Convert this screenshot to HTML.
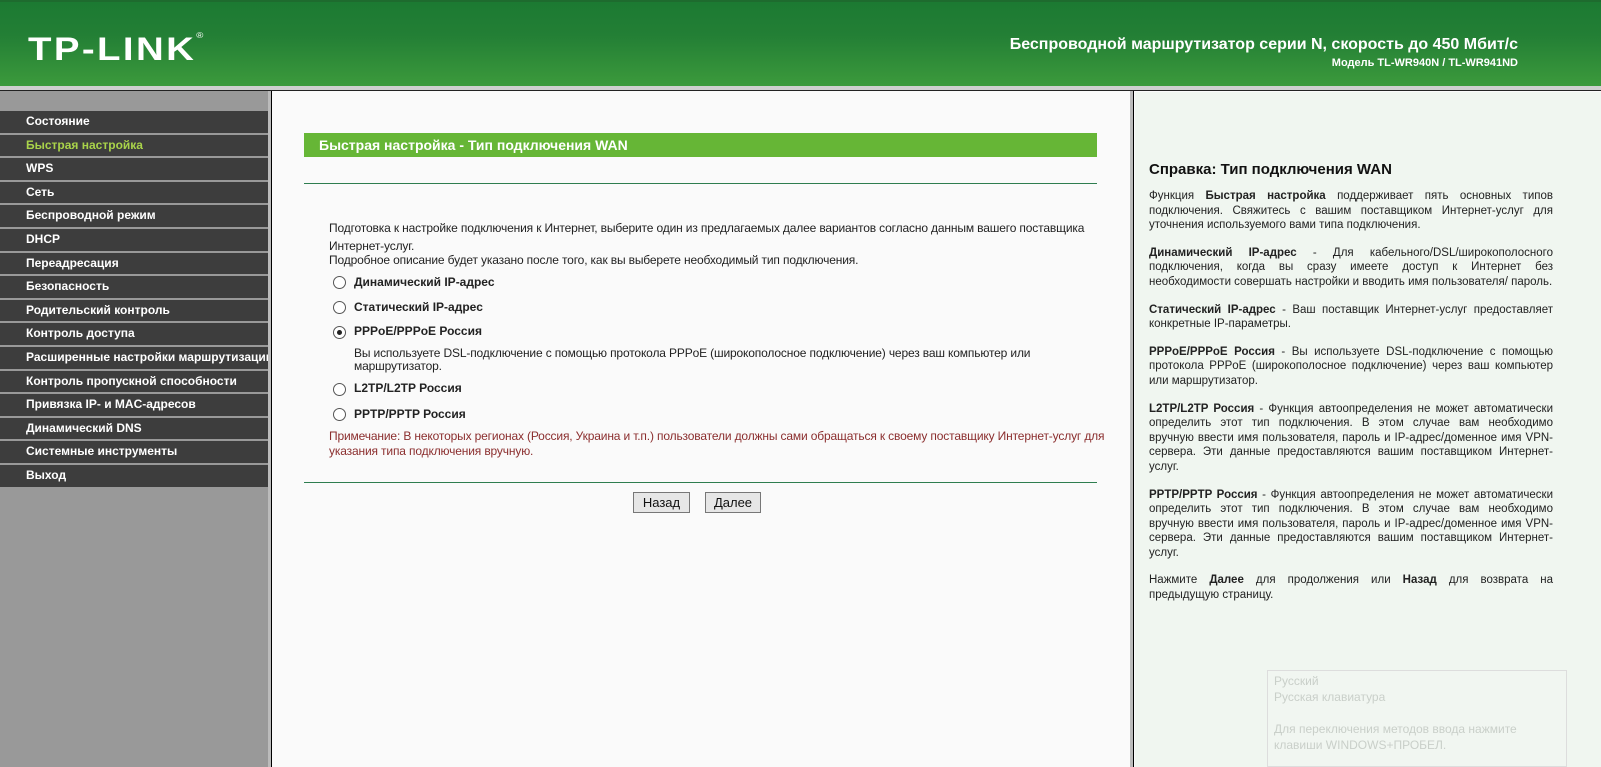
<!DOCTYPE html>
<html><head><meta charset="utf-8"><style>
*{margin:0;padding:0;box-sizing:border-box}
body{width:1601px;height:767px;overflow:hidden;font-family:"Liberation Sans",Arial,sans-serif;background:#fafafa;position:relative}
#hdr{position:absolute;left:0;top:0;width:1601px;height:86px;background:linear-gradient(#1c7a32 0%,#237f35 40%,#3c9a3c 100%);border-top:2px solid #1e6b2e}
#logo{position:absolute;left:28px;top:29px;color:#fff;font-weight:bold;font-size:32px;letter-spacing:2px;transform:scaleX(1.2);transform-origin:left;font-family:"Liberation Sans",sans-serif}
#logo sup{font-size:8px;vertical-align:top;font-weight:normal}
#t1{position:absolute;right:83px;top:34px;color:#fff;font-weight:bold;font-size:16px}
#t2{position:absolute;right:83px;top:55px;color:#fff;font-weight:bold;font-size:11px}
#band{position:absolute;left:0;top:86px;width:1601px;height:5px;background:#cfcfcf;border-bottom:1px solid #222}
#side{position:absolute;left:0;top:91px;width:268px;height:676px;background:#999}
#sbar{position:absolute;left:268px;top:91px;width:4px;height:676px;background:#bbb;border-right:1px solid #000}
.it{position:absolute;left:0;width:268px;height:21.6px;background:#3d3d3d;color:#fff;font-weight:bold;font-size:12px;line-height:21px;padding-left:26px;white-space:nowrap;overflow:hidden}
#main{position:absolute;left:273px;top:92px;width:857px;height:675px;background:#fafafa}
#hbar{position:absolute;left:1130px;top:91px;width:4px;height:676px;background:#bbb;border-right:1px solid #000}
#help{position:absolute;left:1135px;top:92px;width:466px;height:675px;background:#f0f6f0}
.gt{position:absolute;left:304px;top:133px;width:793px;height:24px;background:#66b636;color:#fff;font-weight:bold;font-size:14px;line-height:24px;padding-left:15px}
.hr{position:absolute;left:304px;width:793px;height:1px;background:#2e7d4f}
.tx{position:absolute;font-size:12px;color:#222;letter-spacing:-0.15px}
.rd{position:absolute;left:333px;width:13px;height:13px;border:1px solid #555;border-radius:50%;background:#fff}
.rd.on::after{content:"";position:absolute;left:3px;top:3px;width:5px;height:5px;border-radius:50%;background:#222}
.lb{position:absolute;left:354px;font-size:12px;font-weight:bold;color:#222}
.btn{position:absolute;top:492px;height:21px;border:1px solid #777;background:#e6e6e6;font-size:13px;line-height:19px;text-align:center;color:#111}
#help h3{position:absolute;left:14px;top:69px;font-size:15px;color:#111}
#hc{position:absolute;left:14px;top:97px;width:404px;font-size:11.5px;line-height:14.6px;color:#222;text-align:justify}
#hc p{margin-bottom:13px}
#ime{position:absolute;left:1267px;top:670px;width:300px;height:97px;border:1px solid #ddd;background:#f1f6f1;color:#c9cfc9;font-size:12px;line-height:16px;padding:2px 6px}
</style></head><body>
<div id="hdr"><div id="logo">TP-LINK<sup>®</sup></div>
<div id="t1">Беспроводной маршрутизатор серии N, скорость до 450 Мбит/с</div>
<div id="t2">Модель TL-WR940N / TL-WR941ND</div></div>
<div id="band"></div>
<div id="side">
<div class="it" style="top:20px">Состояние</div>
<div class="it" style="top:43.6px;color:#a9d34a">Быстрая настройка</div>
<div class="it" style="top:67.2px">WPS</div>
<div class="it" style="top:90.8px">Сеть</div>
<div class="it" style="top:114.4px">Беспроводной режим</div>
<div class="it" style="top:138px">DHCP</div>
<div class="it" style="top:161.6px">Переадресация</div>
<div class="it" style="top:185.2px">Безопасность</div>
<div class="it" style="top:208.8px">Родительский контроль</div>
<div class="it" style="top:232.4px">Контроль доступа</div>
<div class="it" style="top:256px">Расширенные настройки маршрутизации</div>
<div class="it" style="top:279.6px">Контроль пропускной способности</div>
<div class="it" style="top:303.2px">Привязка IP- и MAC-адресов</div>
<div class="it" style="top:326.8px">Динамический DNS</div>
<div class="it" style="top:350.4px">Системные инструменты</div>
<div class="it" style="top:374px">Выход</div>
</div>
<div id="sbar"></div>
<div id="main"></div>
<div class="gt">Быстрая настройка - Тип подключения WAN</div>
<div class="hr" style="top:183px"></div>
<div class="tx" style="left:329px;top:219px;line-height:18px;width:790px">Подготовка к настройке подключения к Интернет, выберите один из предлагаемых далее вариантов согласно данным вашего поставщика Интернет-услуг.</div>
<div class="tx" style="left:329px;top:253px">Подробное описание будет указано после того, как вы выберете необходимый тип подключения.</div>
<div class="rd" style="top:276px"></div><div class="lb" style="top:275px">Динамический IP-адрес</div>
<div class="rd" style="top:301px"></div><div class="lb" style="top:300px">Статический IP-адрес</div>
<div class="rd on" style="top:326px"></div><div class="lb" style="top:324px">PPPoE/PPPoE Россия</div>
<div class="tx" style="left:354px;top:347px;width:700px;line-height:13px">Вы используете DSL-подключение с помощью протокола PPPoE (широкополосное подключение) через ваш компьютер или маршрутизатор.</div>
<div class="rd" style="top:383px"></div><div class="lb" style="top:381px">L2TP/L2TP Россия</div>
<div class="rd" style="top:408px"></div><div class="lb" style="top:407px">PPTP/PPTP Россия</div>
<div class="tx" style="left:329px;top:429px;width:790px;line-height:15px;color:#8b2e2e">Примечание: В некоторых регионах (Россия, Украина и т.п.) пользователи должны сами обращаться к своему поставщику Интернет-услуг для указания типа подключения вручную.</div>
<div class="hr" style="top:482px"></div>
<div class="btn" style="left:633px;width:57px">Назад</div>
<div class="btn" style="left:705px;width:56px">Далее</div>
<div id="hbar"></div>
<div id="help"><h3>Справка: Тип подключения WAN</h3>
<div id="hc">
<p>Функция <b>Быстрая настройка</b> поддерживает пять основных типов подключения. Свяжитесь с вашим поставщиком Интернет-услуг для уточнения используемого вами типа подключения.</p>
<p><b>Динамический IP-адрес</b> - Для кабельного/DSL/широкополосного подключения, когда вы сразу имеете доступ к Интернет без необходимости совершать настройки и вводить имя пользователя/ пароль.</p>
<p><b>Статический IP-адрес</b> - Ваш поставщик Интернет-услуг предоставляет конкретные IP-параметры.</p>
<p><b>PPPoE/PPPoE Россия</b> - Вы используете DSL-подключение с помощью протокола PPPoE (широкополосное подключение) через ваш компьютер или маршрутизатор.</p>
<p><b>L2TP/L2TP Россия</b> - Функция автоопределения не может автоматически определить этот тип подключения. В этом случае вам необходимо вручную ввести имя пользователя, пароль и IP-адрес/доменное имя VPN-сервера. Эти данные предоставляются вашим поставщиком Интернет-услуг.</p>
<p><b>PPTP/PPTP Россия</b> - Функция автоопределения не может автоматически определить этот тип подключения. В этом случае вам необходимо вручную ввести имя пользователя, пароль и IP-адрес/доменное имя VPN-сервера. Эти данные предоставляются вашим поставщиком Интернет-услуг.</p>
<p>Нажмите <b>Далее</b> для продолжения или <b>Назад</b> для возврата на предыдущую страницу.</p>
</div></div>
<div id="ime">Русский<br>Русская клавиатура<br><br>Для переключения методов ввода нажмите клавиши WINDOWS+ПРОБЕЛ.</div>
</body></html>
